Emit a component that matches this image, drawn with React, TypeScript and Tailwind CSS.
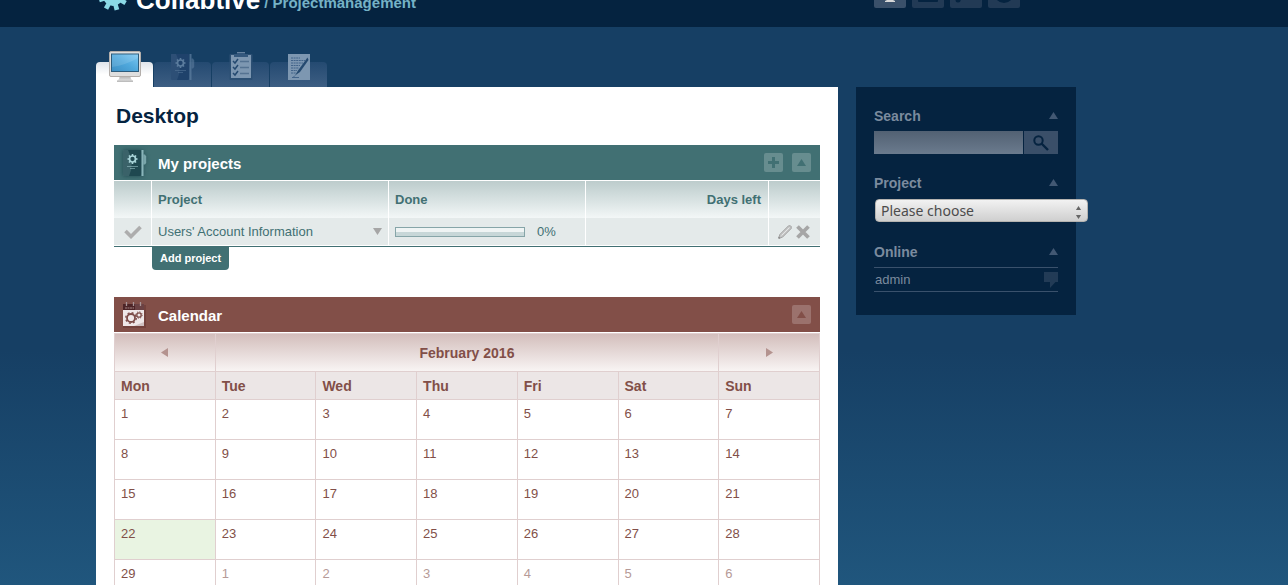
import React from "react";

type IconProps = { className?: string };

const Triangle = ({ className = "" }: IconProps) => (
  <svg viewBox="0 0 9 7" className={className} fill="currentColor" aria-hidden="true">
    <path d="M4.5 0 9 7H0z" />
  </svg>
);

const gearTeeth = [0, 45, 90, 135, 180, 225, 270, 315];

const LogoGear = () => (
  <svg viewBox="0 0 30 30" className="h-[30px] w-[30px] shrink-0" aria-hidden="true">
    <g fill="#8bd9e6">
      {gearTeeth.map((a) => (
        <path key={a} d="M12.8 8 12.600.6h4.800L17.200 8z" transform={`rotate(${a + 29} 15 15)`} />
      ))}
      <path fillRule="evenodd" d="M15 5a10 10 0 1 0 0 20 10 10 0 0 0 0-20zm0 6a4 4 0 1 1 0 8 4 4 0 0 1 0-8z" />
    </g>
  </svg>
);

const MonitorIcon = () => (
  <svg viewBox="0 0 34 34" className="h-[34px] w-[34px]" aria-hidden="true">
    <defs>
      <linearGradient id="screen" x1="0" y1="1" x2="1" y2="0">
        <stop offset="0" stopColor="#3d8fc4" />
        <stop offset="0.5" stopColor="#4fa8dc" />
        <stop offset="1" stopColor="#7cc8f2" />
      </linearGradient>
      <linearGradient id="stand" x1="0" y1="0" x2="0" y2="1">
        <stop offset="0" stopColor="#a5a5a5" />
        <stop offset="1" stopColor="#e4e4e4" />
      </linearGradient>
    </defs>
    <path d="M12 25h10l1 4 2 2H9l2-2z" fill="url(#stand)" />
    <path d="M9 30.500h16v1.500H9z" fill="#bdbdbd" />
    <rect x="1.500" y="1.500" width="31" height="25" rx="1.500" fill="#dedede" stroke="#b3aeaa" />
    <rect x="3" y="3.500" width="28" height="18.500" fill="#2d5c7c" />
    <rect x="4" y="4.500" width="26" height="16.500" fill="url(#screen)" />
    <path d="M4 4.500h26V8Q18 15 4 17z" fill="#fff" opacity=".12" />
  </svg>
);

type NotebookProps = IconProps & { cover?: string; sheen?: string; mark?: string };

const NotebookIcon = ({ className = "", cover = "#1f4850", sheen = "#5b8388", mark = "#a8d3d8" }: NotebookProps) => (
  <svg viewBox="0 0 24 28" className={className} aria-hidden="true">
    <rect x="0" y="1" width="18" height="26" rx="1" fill={cover} />
    <path d="M0 1h5q7 13 1 26H0z" fill={sheen} opacity=".45" />
    <path d="M18.500 1h2v26h-2z" fill={mark} opacity=".75" />
    <path d="M20.500 5.500H22l1.200 2V14L22 15.500h-1.500z" fill={mark} opacity=".6" />
    <g stroke={mark} strokeWidth="1.600">
      {[0, 45, 90, 135].map((a) => (
        <path key={a} d="M9.500 5v10" transform={`rotate(${a} 9.500 10)`} />
      ))}
    </g>
    <circle cx="9.500" cy="10" r="3" fill={cover} stroke={mark} strokeWidth="1.700" />
    <path d="M4 17.500h11M7 19.500h5" stroke={mark} opacity=".5" />
  </svg>
);

const ClipboardIcon = () => (
  <svg viewBox="0 0 24 30" className="h-[30px] w-6" aria-hidden="true">
    <rect x="0.500" y="3" width="23" height="26" rx="1" fill="#2c5074" />
    <rect x="2" y="4" width="20" height="23" fill="#7d97b1" />
    <path d="M8 1h8v2h3v3H5V3h3z" fill="#34587d" />
    <path d="M8 1.500h8" stroke="#6783a0" />
    <g fill="none" strokeWidth="1.500">
      <path d="m4 10 2 2 3-4M4 16l2 2 3-4M4 22l2 2 3-4" stroke="#254a70" />
      <path d="M11 10.500h9M11 16.500h9M11 22.500h9" stroke="#547291" />
    </g>
  </svg>
);

const ReportIcon = () => (
  <svg viewBox="0 0 22 26" className="mb-px h-[26px] w-[22px]" aria-hidden="true">
    <rect width="22" height="26" fill="#7d97b1" />
    <path d="M3 4h9M3 6.500h14M3 9h12M3 11.500h9M3 14h8M3 16.500h6M3 19h5" stroke="#42648a" strokeDasharray="2 .6" />
    <path d="m19.500 3.500-9.500 13-3 5 5-3.500L20.500 6z" fill="#254a70" />
    <path d="m7 21.500-1.500 1.500M4 23.500h7" stroke="#42648a" />
  </svg>
);

const CalendarIcon = () => (
  <svg viewBox="0 0 24 28" className="h-7 w-6" aria-hidden="true">
    <rect x="0" y="4" width="23" height="23" fill="#5c2e2b" opacity=".4" />
    <rect x="0" y="9" width="21" height="16" fill="#efe7e8" />
    <path d="M0 3h21v6H0z" fill="#6b4244" />
    <path d="M0 3h12v6H0z" fill="#4d2426" />
    <path d="m11 25 10-4v4z" fill="#cfc0c1" />
    <path d="M2 7h9" stroke="#a58484" strokeDasharray="2 .5" />
    <path d="M3.500 1v4M10.500 1v4M17.500 1v4" stroke="#a89496" strokeWidth="1.300" />
    <g fill="none" stroke="#7d4c49">
      <circle cx="8" cy="17" r="4" strokeWidth="1.800" />
      <circle cx="8" cy="17" r="5.300" strokeWidth="1.300" strokeDasharray="2 2.160" />
      <circle cx="16" cy="14" r="2.200" strokeWidth="1.300" />
      <circle cx="16" cy="14" r="3.200" strokeDasharray="1.200 1.310" />
    </g>
  </svg>
);

const CheckIcon = () => (
  <svg viewBox="0 0 18 14" className="h-[14px] w-[18px]" aria-hidden="true">
    <path d="m1.500 6 5.500 5.500L16.500 2" fill="none" stroke="#adadad" strokeWidth="3.600" />
  </svg>
);

const PencilIcon = () => (
  <svg viewBox="0 0 14 14" className="h-[14px] w-[14px]" aria-hidden="true">
    <path d="M.8 13.200 1.800 9.500 10.500.8h2l.7.7v2L4.500 12.200z" fill="#c4c5c5" stroke="#a3a3a3" />
    <path d="M3.500 10.500 11.500 2.500" stroke="#e4e6e6" />
    <path d="M.5 13.500v-2l2 2z" fill="#777" />
  </svg>
);

const CrossIcon = () => (
  <svg viewBox="0 0 14 14" className="h-[14px] w-[14px]" aria-hidden="true">
    <path d="m1.500 1.500 11 11M12.500 1.500l-11 11" stroke="#a6a6a6" strokeWidth="3.800" />
  </svg>
);

const tabs = [
  { name: "My projects", icon: <NotebookIcon className="h-7 w-6" cover="#1f426b" sheen="#3d5f85" mark="#5b7c9d" /> },
  { name: "My tasks", icon: <ClipboardIcon /> },
  { name: "My messages", icon: <ReportIcon /> },
];

const weekdays = ["Mon", "Tue", "Wed", "Thu", "Fri", "Sat", "Sun"];
const weeks = Array.from({ length: 5 }, (_, w) => Array.from({ length: 7 }, (_, d) => w * 7 + d + 1));
const daysInMonth = 29;
const today = 22;

const toolButton = "flex h-[19px] w-[19px] items-center justify-center rounded-xs";

function SideTitle({ children, htmlFor }: { children: string; htmlFor?: string }) {
  return (
    <div className="flex h-5 items-center justify-between text-sm font-bold text-[#7b8b9e]">
      <h2>{htmlFor ? <label htmlFor={htmlFor}>{children}</label> : children}</h2>
      <button aria-label={`Toggle ${children}`} className="pb-0.5 text-[#425873]">
        <Triangle className="block h-[7px] w-[9px]" />
      </button>
    </div>
  );
}

function Header() {
  const navBox = "flex h-8 w-8 items-end justify-center overflow-hidden rounded-xs";
  return (
    <header className="flex h-[27px] items-end overflow-hidden bg-[#052340] pl-24">
      <div className="flex w-full max-w-[980px] items-end justify-between pr-14">
        <a href="#" className="flex items-end font-bold">
          <span className="mb-4 mr-2 pl-0.5"><LogoGear /></span>
          <span className="mb-3.5 text-[26px] leading-[26px] text-white">Collabtive</span>
          <span className="mb-4 ml-1 text-[15px] leading-4 text-[#75b2c6]">/ Projectmanagement</span>
        </a>
        <nav className="mb-[19px] flex gap-1.5">
          <a href="#" aria-label="Desktop" className={`${navBox} bg-[#3a506a]`}>
            <svg viewBox="0 0 32 32" className="h-8 w-8" aria-hidden="true">
              <path d="M8 8h16v14H8z" fill="#ddd" />
              <path d="M13 22h6v2l2 1v1H11v-1l2-1z" fill="#d8d8d8" />
            </svg>
          </a>
          <a href="#" aria-label="Profile" className={`${navBox} bg-[#223a55]`}>
            <svg viewBox="0 0 32 32" className="h-8 w-8" aria-hidden="true">
              <path d="M6 14h20v11q0 1-1 1H7q-1 0-1-1z" fill="#052340" />
            </svg>
          </a>
          <a href="#" aria-label="Administration" className={`${navBox} bg-[#223a55]`}>
            <svg viewBox="0 0 32 32" className="h-8 w-8" aria-hidden="true">
              <path d="m18 14-9 9" stroke="#052340" strokeWidth="4" />
              <circle cx="8" cy="24" r="2.500" fill="#052340" />
            </svg>
          </a>
          <a href="#" aria-label="Logout" className={`${navBox} bg-[#223a55]`}>
            <svg viewBox="0 0 32 32" className="h-8 w-8" aria-hidden="true">
              <circle cx="16" cy="17" r="8" fill="none" stroke="#052340" strokeWidth="4" />
            </svg>
          </a>
        </nav>
      </div>
    </header>
  );
}

function Projects() {
  const head = "h-[37px] bg-linear-to-b from-[#bccccc] to-[#f3f7f7] px-1.5 font-bold";
  const cell = "h-7 border-b border-white bg-[#e4eaea] px-1.5";
  const line = "border-l border-l-white";
  return (
    <section className="text-[13px] text-[#417073]">
      <div className="flex h-9 items-center border-b border-white bg-[#417073] bg-clip-padding px-[9px]">
        <NotebookIcon className="mr-[11px] h-7 w-6 drop-shadow-[0_0_2px_#1f4850]" />
        <h2 className="flex-1 pt-0.5 text-[15px] leading-5 font-bold text-white">My projects</h2>
        <div className="flex gap-[9px] text-[#417073]">
          <button aria-label="Add project" className={`${toolButton} bg-[#678d8f]`}>
            <svg viewBox="0 0 11 11" className="h-[11px] w-[11px]" aria-hidden="true">
              <path d="M4 0h3v4h4v3H7v4H4V7H0V4h4z" fill="currentColor" />
            </svg>
          </button>
          <button aria-label="Collapse projects" className={`${toolButton} bg-[#678d8f]`}>
            <Triangle className="h-[7px] w-[9px]" />
          </button>
        </div>
      </div>
      <div className="border-b border-[#417073]">
        <table className="w-full table-fixed border-separate border-spacing-0 text-left">
          <colgroup>
            <col className="w-[37px]" />
            <col />
            <col className="w-[197px]" />
            <col className="w-[183px]" />
            <col className="w-[52px]" />
          </colgroup>
          <thead>
            <tr>
              <th className={head} />
              <th className={`${head} ${line}`}>Project</th>
              <th className={`${head} ${line}`}>Done</th>
              <th className={`${head} ${line} text-right`}><span className="pr-px">Days left</span></th>
              <th className={`${head} ${line}`} />
            </tr>
          </thead>
          <tbody>
            <tr>
              <td className={cell}>
                <button aria-label="Close project" className="ml-1 flex"><CheckIcon /></button>
              </td>
              <td className={`${cell} ${line}`}>
                <div className="flex items-center justify-between">
                  <a href="#">Users' Account Information</a>
                  <button aria-label="Show details" className="text-[#a6a6a6]">
                    <Triangle className="h-[7px] w-[9px] rotate-180" />
                  </button>
                </div>
              </td>
              <td className={`${cell} ${line}`}>
                <div className="flex items-center gap-3">
                  <div className="h-2.5 w-[130px] border border-[#86a5a8] bg-linear-to-b from-[#eff4f4] from-50% to-[#c7d7d8] to-50%" />
                  <span>0%</span>
                </div>
              </td>
              <td className={`${cell} ${line}`} />
              <td className={`${cell} ${line}`}>
                <div className="flex gap-1 pl-[3px]">
                  <button aria-label="Edit"><PencilIcon /></button>
                  <button aria-label="Delete"><CrossIcon /></button>
                </div>
              </td>
            </tr>
          </tbody>
        </table>
      </div>
      <button className="ml-[38px] block h-[23px] rounded-b-sm bg-[#417073] px-2 text-[11px] font-bold text-white">
        Add project
      </button>
    </section>
  );
}

function Calendar() {
  const nav = "h-[38px] border border-[#e0cfcf] text-center align-middle";
  return (
    <section className="mt-[27px] text-[13px] text-[#824f48]">
      <div className="flex h-9 items-center border-b border-white bg-[#824f48] bg-clip-padding px-[9px]">
        <CalendarIcon />
        <h2 className="ml-[11px] flex-1 pt-0.5 text-[15px] leading-5 font-bold text-white">Calendar</h2>
        <button aria-label="Collapse calendar" className={`${toolButton} bg-[#9b726d]`}>
          <Triangle className="h-[7px] w-[9px]" />
        </button>
      </div>
      <table className="w-full table-fixed border-collapse text-left">
        <thead className="text-sm font-bold">
          <tr className="bg-linear-to-b from-[#d3bebc] to-[#f9f6f5]">
            <td className={nav}>
              <button aria-label="Previous month" className="pb-0.5 align-middle text-[#b4938f]">
                <Triangle className="h-[7px] w-[9px] -rotate-90" />
              </button>
            </td>
            <th colSpan={5} className={nav}>February 2016</th>
            <td className={nav}>
              <button aria-label="Next month" className="pb-0.5 align-middle text-[#b4938f]">
                <Triangle className="h-[7px] w-[9px] rotate-90" />
              </button>
            </td>
          </tr>
          <tr className="bg-[#ece6e6]">
            {weekdays.map((d) => (
              <th key={d} className="h-7 border border-[#e0cfcf] px-1.5">{d}</th>
            ))}
          </tr>
        </thead>
        <tbody>
          {weeks.map((week) => (
            <tr key={week[0]}>
              {week.map((n) => (
                <td
                  key={n}
                  className={`h-10 border border-[#e0cfcf] px-1.5 pt-1 align-top ${n === today ? "bg-[#e9f4e2]" : ""} ${n > daysInMonth ? "text-[#b69a97]" : ""}`}
                >
                  {n > daysInMonth ? n - daysInMonth : n}
                </td>
              ))}
            </tr>
          ))}
        </tbody>
      </table>
    </section>
  );
}

function Sidebar() {
  return (
    <aside className="mt-9 w-[220px] shrink-0 bg-[#052340] px-[18px] pb-[23px] pt-[19px]">
      <SideTitle htmlFor="search">Search</SideTitle>
      <form className="mt-[5px] flex gap-px">
        <input id="search" type="text" className="h-[23px] w-full min-w-0 bg-linear-to-b from-[#526173] to-[#6b7b8e] px-1 text-[13px] text-white outline-none" />
        <button type="button" aria-label="Search" className="flex h-[23px] w-[34px] shrink-0 items-center justify-center bg-[#3a4f69]">
          <svg viewBox="0 0 16 16" className="h-4 w-4" fill="none" stroke="#052340" aria-hidden="true">
            <circle cx="5.500" cy="5.500" r="4.200" strokeWidth="2" />
            <path d="m8.500 8.500 6.500 6.500" strokeWidth="2.400" />
          </svg>
        </button>
      </form>
      <div className="mt-[19px]">
        <SideTitle htmlFor="project">Project</SideTitle>
      </div>
      <div className="relative ml-px mt-1.5 w-[213px]">
        <select id="project" className="block h-[23px] w-full appearance-none rounded-sm border border-[#b5b3b0] bg-linear-to-b from-[#f2f2f2] to-[#cfcfcf] px-[5px] font-['Noto_Sans',sans-serif] text-sm leading-5 text-[#4c4c4c]">
          <option>Please choose</option>
        </select>
        <span className="pointer-events-none absolute right-1.5 top-[7px] flex flex-col gap-[5px] text-[#666]">
          <Triangle className="h-1 w-[7px]" />
          <Triangle className="h-1 w-[7px] rotate-180" />
        </span>
      </div>
      <div className="mt-5">
        <SideTitle>Online</SideTitle>
      </div>
      <div className="mt-[5px] flex h-[25px] items-center justify-between border-y border-[#3a516c] pl-px text-[13px] text-[#7b8b9e]">
        <a href="#">admin</a>
        <button aria-label="Chat with admin">
          <svg viewBox="0 0 14 16" className="h-4 w-[14px]" fill="#223b56" aria-hidden="true">
            <path d="M0 0h14v10h-2.500L6 16v-6H0z" />
          </svg>
        </button>
      </div>
    </aside>
  );
}

export default function App() {
  return (
    <div className="flex h-screen flex-col overflow-hidden bg-[#163f65] font-['Liberation_Sans',Arial,sans-serif]">
      <Header />
      <div className="flex min-h-0 flex-1 items-start gap-[18px] bg-linear-to-b from-[#163f64] from-58% to-[#20567d] pl-24 pt-6">
        <div className="w-full max-w-[742px]">
          <nav className="flex h-9 items-end gap-px">
            <a href="#" aria-label="Desktop" className="flex h-[25px] w-[57px] items-end justify-center rounded-t bg-linear-to-b from-[#dfe4ea] to-white to-50% pb-[3px]">
              <MonitorIcon />
            </a>
            {tabs.map((t) => (
              <a key={t.name} href="#" aria-label={t.name} className="flex h-[25px] w-[57px] items-end justify-center rounded-t bg-linear-to-b from-[#244a71] to-[#3d5e83] pb-1.5">
                {t.icon}
              </a>
            ))}
          </nav>
          <main className="bg-white px-[18px] pb-10 pt-4">
            <h1 className="mb-[17px] pl-0.5 text-[21px] leading-[25px] font-bold text-[#052340]">Desktop</h1>
            <Projects />
            <Calendar />
          </main>
        </div>
        <Sidebar />
      </div>
    </div>
  );
}
